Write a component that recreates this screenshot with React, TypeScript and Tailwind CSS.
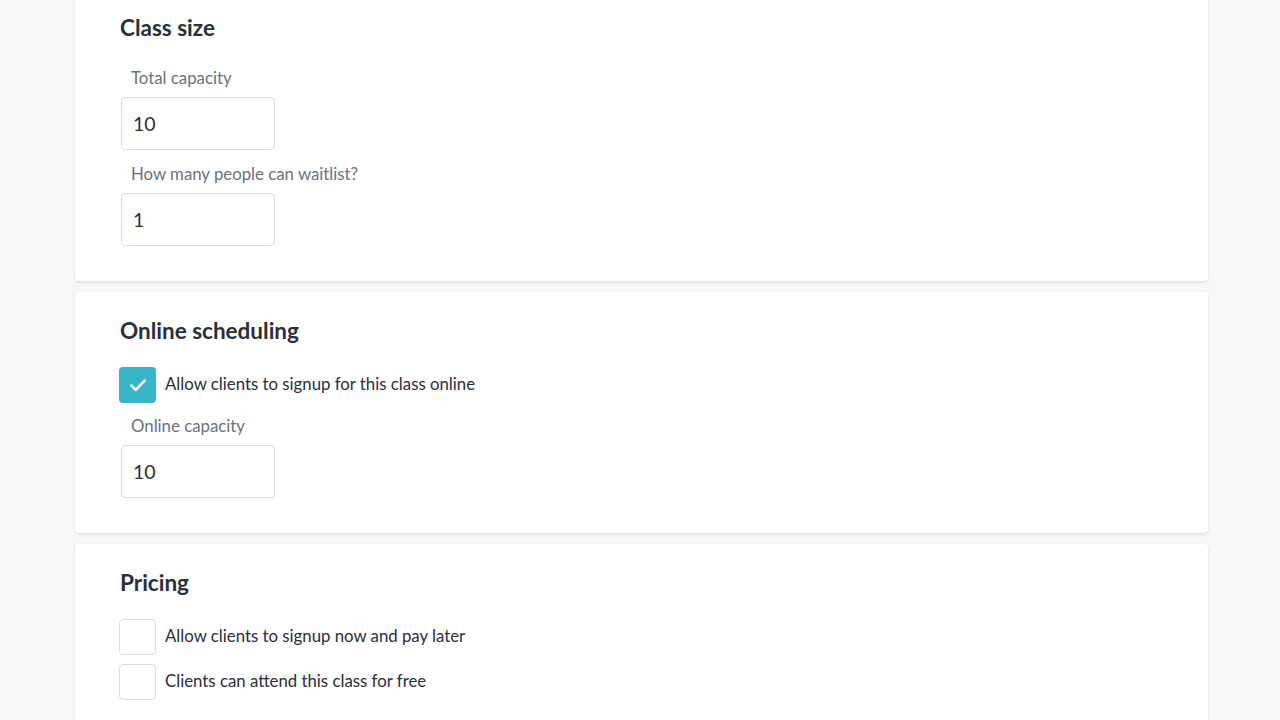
import React from "react";

const font = { fontFamily: "Lato, 'Noto Sans', sans-serif" };

function Card({ title, children, className = "" }: { title: string; children: React.ReactNode; className?: string }) {
  return (
    <div className={`bg-[#fefefe] rounded-[4px] shadow-[0_1px_3px_rgba(0,0,0,0.12)] pl-[45px] pr-6 pt-[25px] ${className}`}>
      <h2 className="text-[22.5px] leading-[28px] font-bold text-[#2b2f3a]">{title}</h2>
      {children}
    </div>
  );
}

function Field({ label, value, className = "" }: { label: string; value: string; className?: string }) {
  return (
    <div className={className}>
      <div className="pl-[11px] text-[16.8px] leading-[22px] text-[#6b7280]">{label}</div>
      <div className="mt-2 ml-px w-[154px] h-[53px] border border-[#d9dce3] rounded-[4px] bg-white flex items-center pl-[11px] text-[19.5px] text-[#2b2f3a]">
        {value}
      </div>
    </div>
  );
}

function Check({ checked, label, className = "" }: { checked?: boolean; label: string; className?: string }) {
  return (
    <div className={`flex items-center -ml-px ${className}`}>
      <div
        className={`w-[37px] h-[36px] rounded-[4px] flex items-center justify-center ${
          checked ? "bg-[#38b4c8]" : "bg-white border border-[#d9dce3]"
        }`}
      >
        {checked && (
          <svg width="22" height="22" viewBox="0 0 20 20" fill="none">
            <path d="M4 10.5l4 4 8-8.5" stroke="white" strokeWidth="2.4" strokeLinecap="round" strokeLinejoin="round" />
          </svg>
        )}
      </div>
      <span className="ml-[9px] text-[16.8px] leading-[22px] -mt-[3px] text-[#2b2f3a]">{label}</span>
    </div>
  );
}

export default function App() {
  return (
    <div className="w-[1280px] h-[720px] overflow-hidden bg-[#f6f7f9]" style={font}>
      <div className="w-[1133px] ml-[75px] -mt-[11px] flex flex-col gap-[11px]">
        <Card title="Class size" className="pb-[35px]">
          <Field label="Total capacity" value="10" className="mt-[25px]" />
          <Field label="How many people can waitlist?" value="1" className="mt-[13px]" />
        </Card>
        <Card title="Online scheduling" className="pb-[35px]">
          <Check checked label="Allow clients to signup for this class online" className="mt-[22px]" />
          <Field label="Online capacity" value="10" className="mt-[12px]" />
        </Card>
        <Card title="Pricing" className="pb-[40px]">
          <Check label="Allow clients to signup now and pay later" className="mt-[22px]" />
          <Check label="Clients can attend this class for free" className="mt-[9px]" />
        </Card>
      </div>
    </div>
  );
}
